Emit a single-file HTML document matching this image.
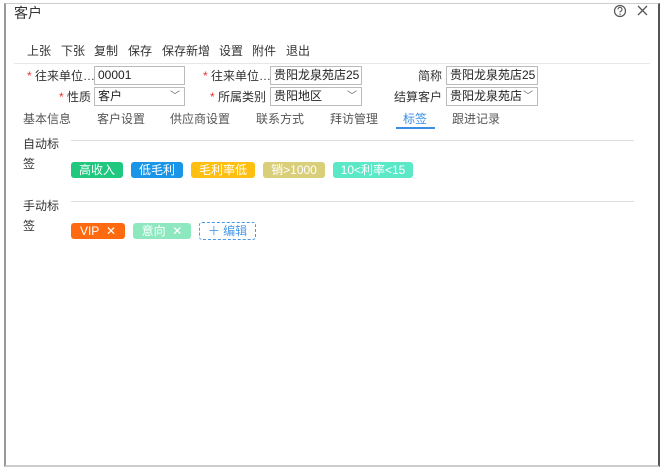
<!DOCTYPE html>
<html><head><meta charset="utf-8"><style>
body{margin:0;width:662px;height:470px;background:#fff;position:relative;overflow:hidden;font-family:"Liberation Sans","Noto Sans CJK SC",sans-serif;font-size:12px;color:#333}
.a{position:absolute;white-space:nowrap}
.frame{position:absolute;left:4px;top:3px;width:652px;height:461px;border-left:2px solid #999;border-top:1px solid #ccc;border-right:2px solid #555;border-bottom:2px solid #ccc}
.inp{position:absolute;height:17px;border:1px solid #bbb;background:#fff;line-height:17px;padding-left:3px;font-size:12px;color:#222;box-sizing:content-box}
.st{color:#e33}
.tag{position:absolute;height:16px;line-height:16px;color:#fff;border-radius:3px;text-align:center;font-size:12px}
.ln{position:absolute;height:1px;background:#ddd}
.chev{position:absolute;right:4px;top:0;font-size:10px;color:#666}
.tb{position:absolute;top:42px}
</style></head><body>
<div class="frame"></div>
<div class="a" style="left:14px;top:3px;font-size:14px;color:#333">客户</div>
<svg class="a" style="left:613px;top:4px" width="14" height="14" viewBox="0 0 14 14"><circle cx="7" cy="7" r="5.5" fill="none" stroke="#555" stroke-width="1.2"/><path d="M5 5.5a2 2 0 1 1 2.5 1.8c-.5.2-.5.6-.5 1.2" fill="none" stroke="#555" stroke-width="1.1"/><circle cx="7" cy="10.2" r=".7" fill="#555"/></svg>
<svg class="a" style="left:636px;top:4px" width="13" height="13" viewBox="0 0 13 13"><path d="M2 2L11 11M11 2L2 11" stroke="#555" stroke-width="1.3"/></svg>
<div class="tb" style="left:27px">上张</div>
<div class="tb" style="left:61px">下张</div>
<div class="tb" style="left:94px">复制</div>
<div class="tb" style="left:128px">保存</div>
<div class="tb" style="left:162px">保存新增</div>
<div class="tb" style="left:219px">设置</div>
<div class="tb" style="left:252px">附件</div>
<div class="tb" style="left:286px">退出</div>
<div class="ln" style="left:14px;top:63px;width:636px;background:#e6e6e6"></div>

<div class="a" style="left:27px;top:67px"><span class="st">*</span> 往来单位…</div>
<div class="inp" style="left:94px;top:66px;width:86px">00001</div>
<div class="a" style="left:203px;top:67px"><span class="st">*</span> 往来单位…</div>
<div class="inp" style="left:270px;top:66px;width:87px">贵阳龙泉苑店25</div>
<div class="a" style="left:418px;top:67px">简称</div>
<div class="inp" style="left:446px;top:66px;width:87px">贵阳龙泉苑店25</div>

<div class="a" style="left:59px;top:88px"><span class="st">*</span> 性质</div>
<div class="inp" style="left:94px;top:87px;width:86px">客户<span class="chev">﹀</span></div>
<div class="a" style="left:210px;top:88px"><span class="st">*</span> 所属类别</div>
<div class="inp" style="left:270px;top:87px;width:87px">贵阳地区<span class="chev">﹀</span></div>
<div class="a" style="left:394px;top:88px">结算客户</div>
<div class="inp" style="left:446px;top:87px;width:87px">贵阳龙泉苑店<span class="chev">﹀</span></div>

<div class="a" style="left:23px;top:110px;color:#555">基本信息</div>
<div class="a" style="left:97px;top:110px;color:#555">客户设置</div>
<div class="a" style="left:170px;top:110px;color:#555">供应商设置</div>
<div class="a" style="left:256px;top:110px;color:#555">联系方式</div>
<div class="a" style="left:330px;top:110px;color:#555">拜访管理</div>
<div class="a" style="left:403px;top:110px;color:#3a8ee6">标签</div>
<div class="a" style="left:396px;top:127px;width:39px;height:2px;background:#3a8ee6"></div>
<div class="a" style="left:452px;top:110px;color:#555">跟进记录</div>

<div class="a" style="left:23px;top:134px;line-height:20px;white-space:normal;width:40px">自动标<br>签</div>
<div class="ln" style="left:71px;top:140px;width:563px"></div>
<div class="tag" style="left:71px;top:162px;width:52px;background:#1fc77f">高收入</div>
<div class="tag" style="left:131px;top:162px;width:52px;background:#1a96e8">低毛利</div>
<div class="tag" style="left:191px;top:162px;width:64px;background:#ffbf10">毛利率低</div>
<div class="tag" style="left:263px;top:162px;width:62px;background:#d9cf7b">销&gt;1000</div>
<div class="tag" style="left:333px;top:162px;width:80px;background:#5ae8c6">10&lt;利率&lt;15</div>

<div class="a" style="left:23px;top:196px;line-height:20px;white-space:normal;width:40px">手动标<br>签</div>
<div class="ln" style="left:71px;top:201px;width:563px"></div>
<div class="tag" style="left:71px;top:223px;width:54px;background:#ff6a10">VIP&nbsp;&nbsp;✕</div>
<div class="tag" style="left:133px;top:223px;width:58px;background:#8de8c0">意向&nbsp;&nbsp;✕</div>
<div class="tag" style="left:199px;top:222px;width:55px;border:1px dashed #4a9ae8;color:#4a9ae8;background:#fff">＋ 编辑</div>
</body></html>
